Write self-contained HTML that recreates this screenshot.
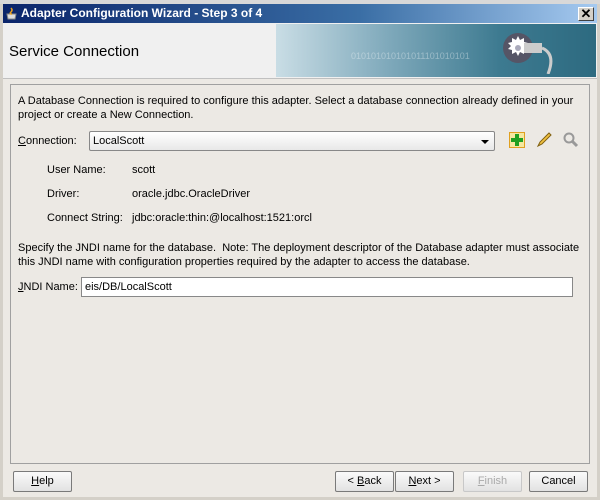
<!DOCTYPE html>
<html><head><style>
*{margin:0;padding:0;box-sizing:border-box}
body{width:600px;height:500px;overflow:hidden;background:#ece9e4;font-family:"Liberation Sans",Tahoma,sans-serif;font-size:11px;color:#000;position:relative}
.a{position:absolute;white-space:nowrap}
.btn{position:absolute;height:21px;border:1px solid #7a7a7a;border-radius:2px;background:linear-gradient(#fafafa,#e2e2e2);text-align:center;line-height:19px;font-size:11px}
u{text-decoration:underline}
</style></head><body>
<div class="a" style="left:0;top:0;width:600px;height:4px;background:#d8d8d8"></div>
<div class="a" style="left:0;top:4px;width:600px;height:496px;background:#ece9e4;border-left:3px solid #d4d0c8;border-right:3px solid #d4d0c8;border-bottom:3px solid #d4d0c8"></div>
<div class="a" style="left:3px;top:4px;width:594px;height:19px;background:linear-gradient(90deg,#0a246a,#3a6ea5 60%,#a6caf0)"></div>
<div class="a" style="left:5px;top:6px;width:14px;height:14px;">
<svg width="14" height="14"><path d="M2 8h9l-1 5H3z" fill="#ddd" stroke="#888"/><path d="M6 2q2 2 0 4q-2 2 1 2" stroke="#e8a020" fill="none" stroke-width="1.5"/></svg></div>
<div class="a" style="left:21px;top:6px;color:#fff;font-weight:bold;font-size:12px">Adapter Configuration Wizard - Step 3 of 4</div>
<div class="a" style="left:578px;top:7px;width:16px;height:14px;background:#d4d0c8;border:1px solid;border-color:#fff #404040 #404040 #fff;text-align:center;line-height:11px;font-size:13px;font-weight:bold">✕</div>
<div class="a" style="left:3px;top:23px;width:594px;height:55px;background:#f0f0f0"></div>
<div class="a" style="left:9px;top:43px;font-size:15px;">Service Connection</div>
<div class="a" style="left:276px;top:24px;width:320px;height:53px;background:linear-gradient(90deg,#c9dde5,#7fa9bb 35%,#3d7a90 70%,#2d6a80)">
<div class="a" style="left:75px;top:27px;color:rgba(255,255,255,.35);font-size:9px">010101010101011101010101</div>
<svg class="a" style="left:222px;top:4px" width="70" height="46"><circle cx="20" cy="20" r="15" fill="#556"/><path d="M20 8l2 4 4-2 0 4 4 1-3 3 3 3-4 1 0 4-4-2-2 4-2-4-4 2 0-4-4-1 3-3-3-3 4-1 0-4 4 2z" fill="#fff"/><circle cx="20" cy="20" r="3" fill="#aab"/><rect x="26" y="15" width="18" height="10" fill="#ccc"/><path d="M44 20q14 6 6 26" stroke="#ccc" stroke-width="3" fill="none"/></svg>
</div>
<div class="a" style="left:3px;top:78px;width:594px;height:1px;background:#c0c0c0"></div>
<div class="a" style="left:10px;top:84px;width:580px;height:380px;border:1px solid #a0a0a0"></div>
<div class="a" style="left:18px;top:94px;line-height:14px">A Database Connection is required to configure this adapter. Select a database connection already defined in your<br>project or create a New Connection.</div>
<div class="a" style="left:18px;top:135px"><u>C</u>onnection:</div>
<div class="a" style="left:89px;top:131px;width:406px;height:20px;border:1px solid #888;border-radius:2px;background:linear-gradient(#fff,#e8e8e8);padding:3px 3px">LocalScott</div>
<div class="a" style="left:481px;top:140px;width:0;height:0;border-left:4px solid transparent;border-right:4px solid transparent;border-top:4px solid #000"></div>
<svg class="a" style="left:509px;top:132px" width="16" height="16"><rect x="0.5" y="0.5" width="15" height="15" fill="#f5e8a0" stroke="#e0a020"/><path d="M8 2v12M2 8h12" stroke="#20a020" stroke-width="4"/></svg>
<svg class="a" style="left:536px;top:132px" width="16" height="16"><path d="M2 14l2-4 9-9 2 2-9 9z" fill="#f0c040" stroke="#806010"/></svg>
<svg class="a" style="left:563px;top:132px" width="16" height="16"><circle cx="6" cy="6" r="4.5" fill="none" stroke="#999" stroke-width="2"/><path d="M9 9l5 5" stroke="#999" stroke-width="3"/></svg>
<div class="a" style="left:47px;top:164px">User Name:</div><div class="a" style="left:132px;top:164px">scott</div>
<div class="a" style="left:47px;top:188px">Driver:</div><div class="a" style="left:132px;top:188px">oracle.jdbc.OracleDriver</div>
<div class="a" style="left:47px;top:212px">Connect String:</div><div class="a" style="left:132px;top:212px">jdbc:oracle:thin:@localhost:1521:orcl</div>
<div class="a" style="left:18px;top:241px;line-height:14px">Specify the JNDI name for the database.&nbsp; Note: The deployment descriptor of the Database adapter must associate<br>this JNDI name with configuration properties required by the adapter to access the database.</div>
<div class="a" style="left:18px;top:281px"><u>J</u>NDI Name:</div>
<div class="a" style="left:81px;top:277px;width:492px;height:20px;border:1px solid #888;background:#fff;padding:3px 3px">eis/DB/LocalScott</div>
<div class="btn" style="left:13px;top:471px;width:59px"><u>H</u>elp</div>
<div class="btn" style="left:335px;top:471px;width:59px">&lt; <u>B</u>ack</div>
<div class="btn" style="left:395px;top:471px;width:59px"><u>N</u>ext &gt;</div>
<div class="btn" style="left:463px;top:471px;width:59px;color:#aaa;border-color:#c8c8c8"><u>F</u>inish</div>
<div class="btn" style="left:529px;top:471px;width:59px">Cancel</div>
</body></html>
